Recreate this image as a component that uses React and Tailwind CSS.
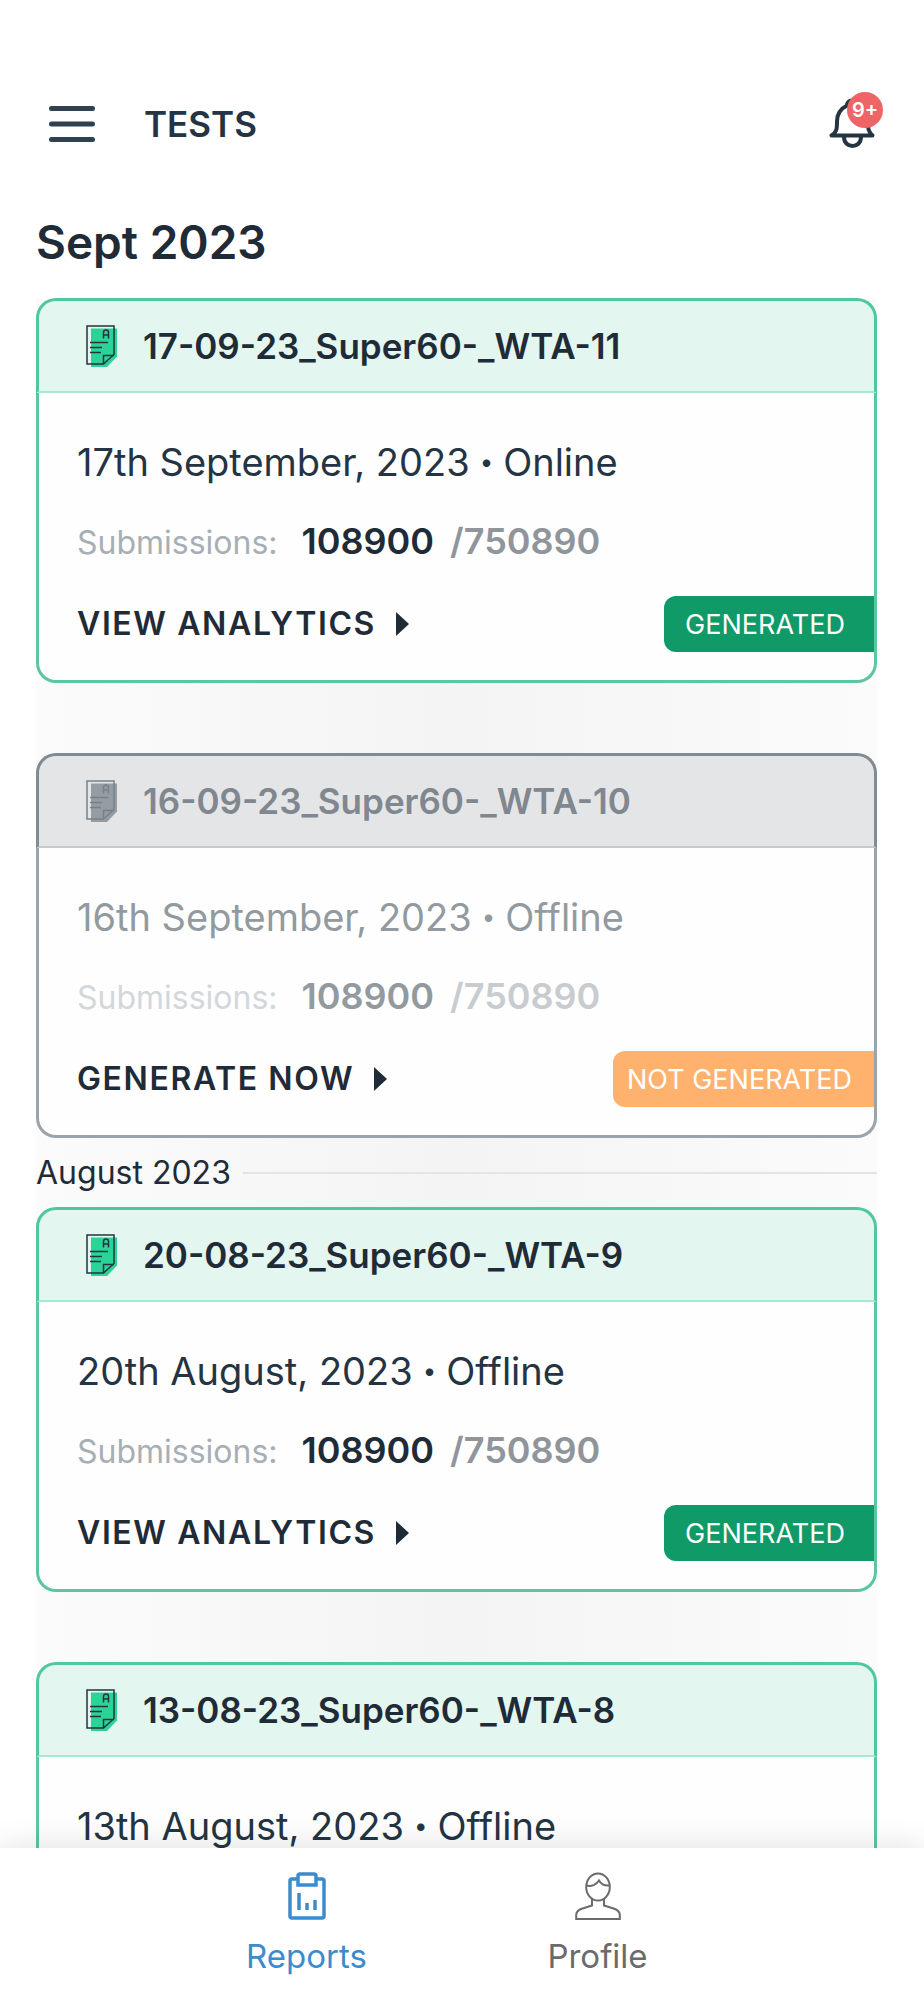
import React from 'react';
import clsx from 'clsx';

const tests = [
  {
    id: 11,
    name: '17-09-23_Super60-_WTA-11',
    date: '17th September, 2023',
    mode: 'Online',
    submitted: 108900,
    total: 750890,
    generated: true,
  },
  {
    id: 10,
    name: '16-09-23_Super60-_WTA-10',
    date: '16th September, 2023',
    mode: 'Offline',
    submitted: 108900,
    total: 750890,
    generated: false,
  },
  {
    id: 9,
    name: '20-08-23_Super60-_WTA-9',
    date: '20th August, 2023',
    mode: 'Offline',
    submitted: 108900,
    total: 750890,
    generated: true,
  },
  {
    id: 8,
    name: '13-08-23_Super60-_WTA-8',
    date: '13th August, 2023',
    mode: 'Offline',
    submitted: 108900,
    total: 750890,
    generated: true,
  },
];

const MenuIcon = () => (
  <svg className="h-10 w-12" viewBox="0 0 48 40" fill="none" stroke="#2f4150" strokeWidth="5" strokeLinecap="round" aria-hidden="true">
    <path d="M3.5 4.5h41M3.5 20h41M3.5 35.5h41" />
  </svg>
);

const BellIcon = () => (
  <svg className="h-[52px] w-[46px]" viewBox="0 0 46 52" fill="none" stroke="#243442" strokeWidth="4" strokeLinecap="round" strokeLinejoin="round" aria-hidden="true">
    <path d="M2.5 39.500h41c-4-4-4.500-6-4.500-14 0-8-4-13-11-16 0-3-2-5-5-5s-5 2-5 5c-6 3-10 8-10 16 0 8-.5 11-5.500 14z" />
    <path d="M15 41c0 12 17 12 17 0" />
  </svg>
);

const TestIcon = ({ active }) => (
  <svg className="h-[42px] w-[31px] shrink-0" viewBox="0 0 31 42" fill="none" aria-hidden="true">
    <path d="M5 3.500h26v28L21 42H5z" fill={active ? '#2bd396' : '#959da2'} />
    <g stroke={active ? '#243442' : '#76818a'} strokeWidth="1.500">
      <path d="M1 1h27v28.500L17.500 39H1z" />
      <path d="M17.500 39v-8.500H28" />
      <path d="M4 17.500h18M4 22.500h12M4 27.500h11" />
      <path d="M17.500 13.500V7.500c0-3.500 5-3.500 5 0v6M17.500 10h5" />
    </g>
  </svg>
);

const ReportsIcon = () => (
  <svg className="h-12 w-[38px]" viewBox="0 0 38 48" fill="none" stroke="#3b8ccd" strokeWidth="3.500" aria-hidden="true">
    <path d="M10 7H4Q2 7 2 9v35q0 2 2 2h30q2 0 2-2V9q0-2-2-2h-6" />
    <path d="M12 2h14q2 0 2 2v9H10V4q0-2 2-2z" />
    <path d="M11 21v17M19 31v7M27 28v10" />
  </svg>
);

const ProfileIcon = () => (
  <svg className="h-12 w-[46px]" viewBox="0 0 46 48" fill="none" stroke="#6b6b6b" strokeWidth="2" aria-hidden="true">
    <ellipse cx="23" cy="15" rx="11.800" ry="13.500" />
    <path d="M11.500 13.500c5 1.500 10-1 12.500-5 2 3.500 5.500 5.500 10.500 5" />
    <path d="M17 27v6.500L6 37C2.500 38.500 1.200 40.500 1.200 43v4h43.600v-4c0-3-1.300-4.500-4.800-6L29 33.500V27" />
  </svg>
);

const TestCard = ({ test }) => {
  const active = test.generated;

  return (
    <article>
      <header
        className={clsx(
          'flex items-center gap-[26px] rounded-t-[20px] border-[3px] border-b-2 pl-[47px] h-[95px]',
          active
            ? 'bg-[#e3f6ef] border-[#4fc89d] border-b-[#a6e9d1] text-[#1f2b37]'
            : 'bg-[#e4e5e7] border-[#818b94] border-b-[#c6cace] text-[#80878e]'
        )}
      >
        <TestIcon active={active} />
        <h3 className="text-[35px] leading-10 font-semibold">{test.name}</h3>
      </header>
      <div
        className={clsx(
          'rounded-b-[20px] border-[3px] border-t-0 bg-[#fefefe] pl-[38px] pt-[49px] pb-7',
          active ? 'border-[#5cc6a1]' : 'border-[#9ba3ab]'
        )}
      >
        <p className={clsx('flex items-center gap-[10px] text-[38px] leading-10', active ? 'text-[#243442]' : 'text-[#929a9f]')}>
          {test.date}
          <span className="text-2xl leading-10">•</span>
          {test.mode}
        </p>
        <p className="mt-[39px] flex h-10 items-baseline text-[36px] leading-10 font-semibold">
          <span className={clsx('mr-6 text-[32px] font-normal', active ? 'text-[#a7afb5]' : 'text-[#d3d7da]')}>
            Submissions:
          </span>
          <span className={clsx('mr-4', active ? 'text-[#1f2b37]' : 'text-[#929a9f]')}>{test.submitted}</span>
          <span className={active ? 'text-[#8f959b]' : 'text-[#c8ccd0]'}>/{test.total}</span>
        </p>
        <div className="mt-[35px] flex items-center justify-between">
          <button type="button" className="flex items-center gap-5 text-[32px] leading-10 font-semibold tracking-wider text-[#1f2b37]">
            {active ? 'VIEW ANALYTICS' : 'GENERATE NOW'}
            <svg className="h-6 w-[13px]" viewBox="0 0 13 24" fill="currentColor" aria-hidden="true">
              <path d="M0 0l13 12L0 24z" />
            </svg>
          </button>
          <span
            className={clsx(
              'flex h-14 items-center justify-center rounded-l-xl pt-[2px] pr-2 text-[27px] text-white',
              active ? 'w-[210px] bg-[#0f9a68]' : 'w-[261px] bg-[#ffb26d]'
            )}
          >
            {active ? 'GENERATED' : 'NOT GENERATED'}
          </span>
        </div>
      </div>
    </article>
  );
};

const App = () => {
  return (
    <div className="flex h-screen flex-col bg-white font-['Inter',sans-serif] text-[#1f2b37]">
      <header className="flex items-end pt-[92px] pl-12 pr-[41px]">
        <button type="button" aria-label="Open menu" className="mb-1">
          <MenuIcon />
        </button>
        <h1 className="mb-1 ml-12 text-[35px] leading-10 font-semibold text-[#243442]">TESTS</h1>
        <button type="button" aria-label="Notifications" className="relative ml-auto flex h-14 w-[54px] items-end">
          <BellIcon />
          <span className="absolute top-0 right-0 flex h-9 w-9 items-center justify-center rounded-full bg-[#ee6567] text-xl font-semibold text-white">
            9+
          </span>
        </button>
      </header>

      <main className="min-h-0 flex-1 overflow-y-auto pl-9 pr-[47px] [scrollbar-width:none]">
        <h2 className="pt-[68px] pb-[30px] text-[46px] leading-[52px] font-semibold">Sept 2023</h2>
        <div className="bg-linear-to-r from-[#fbfbfb] via-[#f4f4f4] to-[#fbfbfb]">
          <TestCard test={tests[0]} />
          <div className="h-[70px]" />
          <TestCard test={tests[1]} />
          <div className="flex h-[69px] items-center gap-3">
            <h2 className="text-[32px] leading-10">August 2023</h2>
            <hr className="flex-1 border-t-2 border-[#e3e4e5]" />
          </div>
          <TestCard test={tests[2]} />
          <div className="h-[70px]" />
          <TestCard test={tests[3]} />
        </div>
      </main>

      <nav className="relative flex h-[152px] shrink-0 justify-center bg-white pt-6 pr-5 text-[33px] leading-10 shadow-[0_-4px_28px_rgba(0,0,0,0.10)]">
        <a href="#reports" className="flex w-[291px] flex-col items-center gap-4 text-[#3b8ccd]">
          <ReportsIcon />
          Reports
        </a>
        <a href="#profile" className="flex w-[291px] flex-col items-center gap-4 text-[#6b6b6b]">
          <ProfileIcon />
          Profile
        </a>
      </nav>
    </div>
  );
};

export default App;
